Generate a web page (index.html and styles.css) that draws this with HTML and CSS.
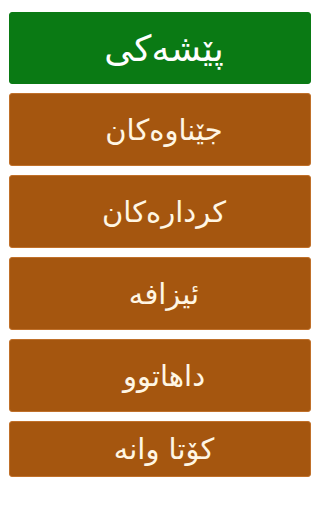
FILE: index.html
```html
<!DOCTYPE html>
<html lang="ckb" dir="rtl">
<head>
<meta charset="utf-8">
<link rel="stylesheet" href="styles.css">
</head>
<body>
<div class="menu">
  <div class="item title">پێشەکی</div>
  <div class="item">جێناوەکان</div>
  <div class="item">کردارەکان</div>
  <div class="item">ئیزافە</div>
  <div class="item">داهاتوو</div>
  <div class="item last">کۆتا وانە</div>
</div>
</body>
</html>
```
FILE: styles.css
```css
html, body {
  margin: 0;
  padding: 0;
  background: #ffffff;
}
.menu {
  display: flex;
  flex-direction: column;
  gap: 9px;
  padding: 12px 8px 0 8px;
  width: 302px;
}
.item {
  height: 73px;
  display: flex;
  align-items: center;
  justify-content: center;
  padding-left: 8px;
  background: #a5560f;
  border: 1px solid #c0702a;
  box-sizing: border-box;
  border-radius: 3px;
  color: #fff6e4;
  font-family: "DejaVu Sans", sans-serif;
  font-size: 29px;
}
.title {
  height: 72px;
  background: #0a7a14;
  border-color: #0a7a14;
  color: #ffffff;
  font-size: 36px;
}
.last {
  height: 56px;
}
```
